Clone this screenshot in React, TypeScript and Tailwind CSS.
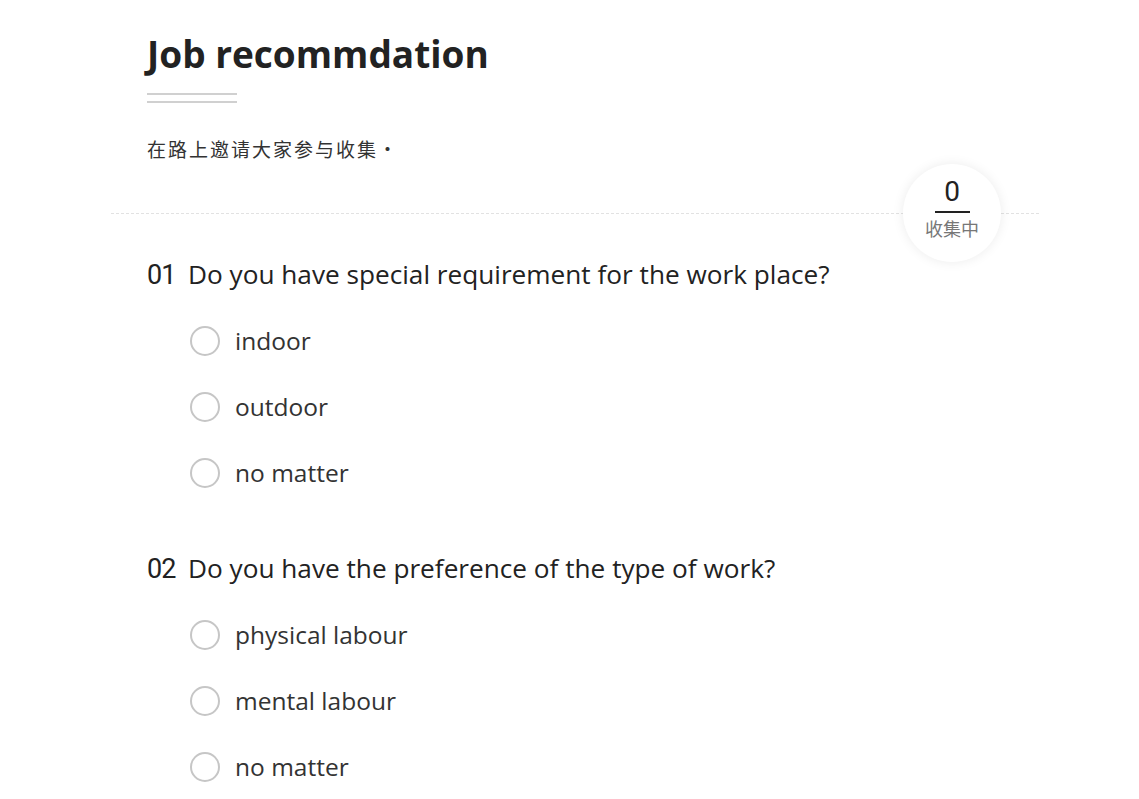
import React from "react";

const questions = [
  { n: "01", q: "Do you have special requirement for the work place?", opts: ["indoor", "outdoor", "no matter"] },
  { n: "02", q: "Do you have the preference of the type of work?", opts: ["physical labour", "mental labour", "no matter"] },
];

const font = { fontFamily: '"Open Sans", "Noto Sans", "Noto Sans CJK SC", sans-serif' };

export default function App() {
  return (
    <div className="w-[1139px] h-[799px] overflow-hidden bg-white text-[#222]" style={font}>
      <div className="pl-[147px] pt-[30px]">
        <h1 className="text-[37px] font-bold leading-[48px] text-[#222]">Job recommdation</h1>
        <div className="mt-[15px] w-[90px] flex flex-col gap-[6px]">
          <div className="h-[2px] bg-[#d0d0d0]" />
          <div className="h-[2px] bg-[#d0d0d0]" />
        </div>
        <p className="mt-[32px] text-[19px] leading-[28px] tracking-[2px] text-[#333] font-['Noto_Sans_CJK_SC',sans-serif]">在路上邀请大家参与收集·</p>
      </div>
      <div className="relative mt-[50px] ml-[111px] w-[928px] border-t border-dashed border-[#e2e2e2]">
        <div className="absolute left-[792px] top-[-50px] w-[98px] h-[98px] rounded-full bg-white shadow-[0_0_12px_rgba(0,0,0,0.08)] flex flex-col items-center">
          <div className="mt-[13px] text-[28px] leading-[30px] text-[#222] font-['Roboto',sans-serif]">0</div>
          <div className="mt-[4px] w-[35px] h-[2px] bg-[#222]" />
          <div className="mt-[3px] text-[18px] leading-[24px] text-[#777] font-['Noto_Sans_CJK_SC',sans-serif]">收集中</div>
        </div>
      </div>
      <div className="pl-[147px] pt-[43px] flex flex-col gap-[60px]">
        {questions.map((qq) => (
          <div key={qq.n}>
            <div className="flex items-center h-[36px]">
              <span className="font-['Roboto',sans-serif] text-[27px] tracking-[-1px] text-[#222] w-[41px]">{qq.n}</span>
              <span className="text-[26.2px] text-[#222]">{qq.q}</span>
            </div>
            <div className="mt-[30px] pl-[43px] flex flex-col gap-[30px]">
              {qq.opts.map((o) => (
                <div key={o} className="flex items-center h-[36px]">
                  <div className="w-[30px] h-[30px] rounded-full border-2 border-[#c6c6c6] bg-white" />
                  <span className="ml-[15px] text-[24.5px] text-[#333]">{o}</span>
                </div>
              ))}
            </div>
          </div>
        ))}
      </div>
    </div>
  );
}
